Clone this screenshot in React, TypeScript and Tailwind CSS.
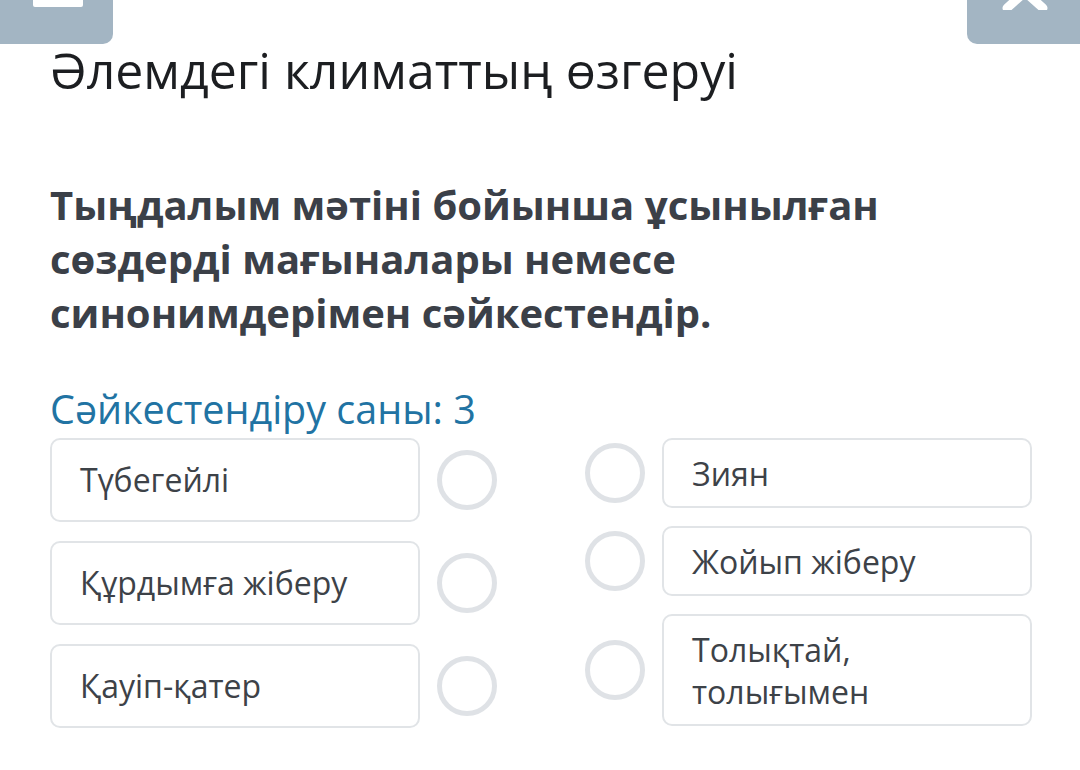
import React from "react";

const leftItems = ["Түбегейлі", "Құрдымға жіберу", "Қауіп-қатер"];
const rightItems = [
  { text: "Зиян", h: "h-[70px]" },
  { text: "Жойып жіберу", h: "h-[70px]" },
  { text: "Толықтай, толығымен", h: "h-[112px]" },
];

function Ring() {
  return <div className="w-[60px] h-[60px] shrink-0 rounded-full border-[5px] border-[#dfe2e6]" />;
}

export default function App() {
  return (
    <div
      className="w-[1080px] h-[770px] bg-white overflow-hidden"
      style={{ fontFamily: '"Open Sans", "Noto Sans", sans-serif' }}
    >
      {/* top buttons */}
      <div className="flex justify-between h-[44px]">
        <div className="relative w-[113px] h-[44px] bg-[#a3b5c3] rounded-br-[10px]">
          <div className="absolute left-[33px] top-0 w-[50px] h-[7px] bg-white rounded-b-[2px]" />
        </div>
        <div className="relative w-[113px] h-[44px] bg-[#a3b5c3] rounded-bl-[10px] overflow-hidden">
          <svg className="absolute left-[28px] top-[-30px]" width="60" height="40" viewBox="0 0 60 40">
            <path d="M12 6 L48 38 M48 6 L12 38" stroke="white" strokeWidth="9" strokeLinecap="round" fill="none" />
          </svg>
        </div>
      </div>

      <div className="pl-[50px] pr-[40px]">
        <h1 className="text-[50px] leading-[56px] text-[#1c1e21] font-normal mt-[-2px]">
          Әлемдегі климаттың өзгеруі
        </h1>

        <p className="mt-[80px] text-[40px] leading-[54px] font-bold text-[#3b4048] w-[960px]">
          Тыңдалым мәтіні бойынша ұсынылған сөздерді мағыналары немесе синонимдерімен сәйкестендір.
        </p>

        <div className="mt-[46px] text-[39.5px] leading-[46px] text-[#2173a3]">Сәйкестендіру саны: 3</div>

        <div className="flex mt-[6px]">
          <div className="flex flex-col gap-[19px]">
            {leftItems.map((t) => (
              <div key={t} className="flex items-center">
                <div className="w-[370px] h-[84px] border-[2.5px] border-[#e1e4e7] rounded-[10px] flex items-center pl-[28px] text-[32px] text-[#3d4248]">
                  {t}
                </div>
                <div className="ml-[17px]">
                  <Ring />
                </div>
              </div>
            ))}
          </div>

          <div className="flex flex-col gap-[18px] ml-[88px]">
            {rightItems.map((it) => (
              <div key={it.text} className="flex items-center">
                <Ring />
                <div
                  className={`ml-[17px] w-[370px] ${it.h} border-[2.5px] border-[#e1e4e7] rounded-[10px] flex items-center pl-[28px] pr-[20px] text-[32px] leading-[42px] text-[#3d4248]`}
                >
                  <span className="max-w-[260px] mt-[2px]">{it.text}</span>
                </div>
              </div>
            ))}
          </div>
        </div>
      </div>
    </div>
  );
}
